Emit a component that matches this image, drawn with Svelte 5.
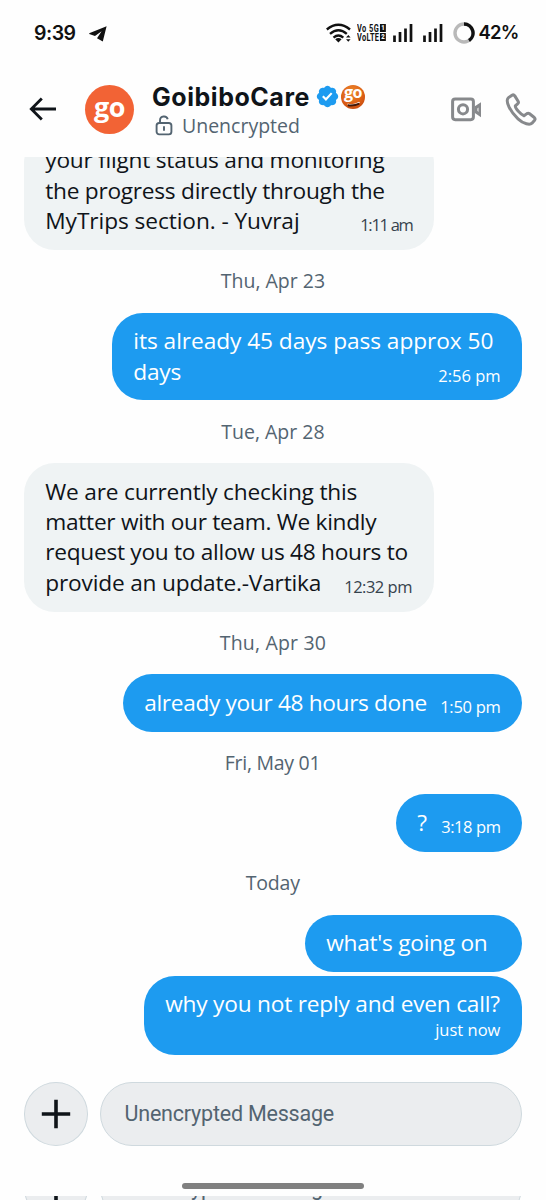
<script>
  const thread = [
    {
      side: 'in', wide: true, time: '1:11 am', timeW: 52,
      lines: [['your flight status and monitoring', 339], ['the progress directly through the', 340], ['MyTrips section. - Yuvraj', 254]]
    },
    { date: 'Thu, Apr 23', w: 104 },
    {
      side: 'out', wide: true, time: '2:56 pm', timeW: 62,
      lines: [['its already 45 days pass approx 50', 360], ['days', 48]]
    },
    { date: 'Tue, Apr 28', w: 103 },
    {
      side: 'in', wide: true, time: '12:32 pm', timeW: 68,
      lines: [['We are currently checking this', 312], ['matter with our team. We kindly', 331], ['request you to allow us 48 hours to', 363], ['provide an update.-Vartika', 276]]
    },
    { date: 'Thu, Apr 30', w: 106 },
    { side: 'out', time: '1:50 pm', timeW: 60, lines: [['already your 48 hours done', 283]] },
    { date: 'Fri, May 01', w: 96 },
    { side: 'out', time: '3:18 pm', timeW: 59, lines: [['?', 11]] },
    { date: 'Today', w: 54 },
    { side: 'out', time: '', timeW: 0, lines: [["what's going on", 161]] },
    { side: 'out', below: true, time: 'just now', timeW: 65, lines: [['why you not reply and even call?', 335]] }
  ];

  // Spreads the letters of a single line so that it fills the given width.
  function fit(node, width) {
    const apply = () => {
      node.style.letterSpacing = '0';
      node.style.width = 'auto';
      const natural = node.offsetWidth;
      const n = node.textContent.length;
      if (n > 1) node.style.letterSpacing = `${(width - natural) / n}px`;
      node.style.width = `${width}px`;
    };
    apply();
    document.fonts?.ready.then(apply);
  }
</script>

{#snippet signal()}
  <svg class="signal" width="20" height="18" viewBox="0 0 20 18">
    <path d="M1.5 11.5V18M7 8V18M12.5 4.5V18M18 0V18" stroke="#111" stroke-width="2.7" />
  </svg>
{/snippet}

{#snippet composer()}
  <div class="composer">
    <button class="plus" aria-label="Add">
      <svg width="30" height="30" viewBox="0 0 30 30"><path d="M15 .7v28.6M.8 15h28.4" stroke="#0f1419" stroke-width="3.6" /></svg>
    </button>
    <div class="field"><span use:fit={210}>Unencrypted Message</span></div>
  </div>
{/snippet}

<div class="screen">
  <div class="status">
    <span class="clock" use:fit={42}>9:39</span>
    <svg class="plane" width="18" height="16" viewBox="0 0 18 16"><path d="M17.6.2 13.8 15.4 8 12.3 12.6 5.2 6 10 .2 8.1Q-.2 7.4.8 6.9Z" fill="#111" /></svg>
    <svg class="wifi" width="26" height="20" viewBox="0 0 26 20">
      <g fill="none" stroke="#111" stroke-width="2.4">
        <path d="M.8 6.5Q12.4-3 24 6.5" /><path d="M4 10.8Q12.4 3.8 20.8 10.8" /><path d="M7.5 14.6Q12.4 10.4 17.3 14.6" />
      </g>
      <path d="M9.2 16.2Q12.4 13.8 15.6 16.2L12.4 19.5ZM20 14.4 22.3 12 24.6 14.4ZM20 16.3H24.6L22.3 18.8Z" fill="#111" />
    </svg>
    <div class="volte">
      <div><span use:fit={30}>Vo 5G</span><b>1</b></div>
      <div><span use:fit={30}>VoLTE</span><b>2</b></div>
    </div>
    {@render signal()}
    {@render signal()}
    <svg class="battery" width="22" height="22" viewBox="0 0 22 22">
      <circle cx="11" cy="11" r="9" fill="none" stroke="#b9b9b9" stroke-width="3.4" />
      <path d="M11 2a9 9 0 0 1 5 16.5" fill="none" stroke="#111" stroke-width="3.4" />
    </svg>
    <span class="pct" use:fit={39.5}>42%</span>
  </div>

  <header>
    <svg class="back" width="28" height="24" viewBox="0 0 28 24"><path d="M12.8 1.4 2.3 12 12.8 22.6M2.3 12H27" fill="none" stroke="#0f1419" stroke-width="2.8" /></svg>
    <div class="avatar"><span>go</span></div>
    <div class="who">
      <div class="name">
        <span use:fit={158}>GoibiboCare</span>
        <svg class="verified" width="23" height="23" viewBox="0.9 0.9 20.2 20.2"><path fill="#1d9bf0" d="M20.396 11c-.018-.646-.215-1.275-.57-1.816-.354-.54-.852-.972-1.438-1.246.223-.607.27-1.264.14-1.897-.131-.634-.437-1.218-.882-1.687-.47-.445-1.053-.75-1.687-.882-.633-.13-1.29-.083-1.897.14-.273-.587-.704-1.086-1.245-1.44S11.647 1.62 11 1.604c-.646.017-1.273.213-1.813.568s-.969.854-1.24 1.44c-.608-.223-1.267-.272-1.902-.14-.635.13-1.22.436-1.69.882-.445.47-.749 1.055-.878 1.688-.13.633-.08 1.29.144 1.896-.587.274-1.087.705-1.443 1.245-.356.54-.555 1.17-.574 1.817.02.647.218 1.276.574 1.817.356.54.856.972 1.443 1.245-.224.606-.274 1.263-.144 1.896.13.634.433 1.218.877 1.688.47.443 1.054.747 1.687.878.633.132 1.29.084 1.897-.136.274.586.705 1.084 1.246 1.439.54.354 1.17.551 1.816.569.647-.016 1.276-.213 1.817-.567s.972-.854 1.245-1.44c.604.239 1.266.296 1.903.164.636-.132 1.22-.447 1.68-.907.46-.46.776-1.044.908-1.681s.075-1.299-.165-1.903c.586-.274 1.084-.705 1.439-1.246.354-.54.551-1.17.569-1.816z" /><path fill="#fff" d="M9.662 14.85l-3.429-3.428 1.293-1.302 2.072 2.072 4.4-4.794 1.347 1.246z" /></svg>
        <div class="affiliate">
          <span>go</span>
          <svg width="16" height="6" viewBox="0 0 16 6"><path d="M1.5 3Q7 5.2 13.5 1.2" fill="none" stroke="#fff" stroke-width="1.3" /><path d="M1.8 4.2Q8 5.2 13.3 2.6" fill="none" stroke="#40180a" stroke-width="1.9" /></svg>
        </div>
      </div>
      <div class="sub">
        <svg width="18" height="21" viewBox="0 0 18 21"><g fill="none" stroke="#536471" stroke-width="1.9"><rect x="1.6" y="8" width="14.8" height="11.4" rx="2.6" /><path d="M5 8V5.4C5 .6 11.7.2 12.7 4.3M9 11.3v4.5" /></g></svg>
        <span use:fit={118}>Unencrypted</span>
      </div>
    </div>
    <svg class="video" width="31" height="25" viewBox="0 0 31 25">
      <rect x="1.6" y="1.9" width="20.8" height="20.8" rx="2.6" fill="none" stroke="#87898c" stroke-width="3" />
      <circle cx="12" cy="12.3" r="4.6" fill="none" stroke="#87898c" stroke-width="3" />
      <path d="M23.5 9.5 30 5.2V20.2L23.5 15.8Z" fill="#87898c" /><path d="M26 11.6 27.8 10.6V14.9L26 13.8Z" fill="#ccc" />
    </svg>
    <svg class="phone" width="32" height="33" viewBox="0 0 32 33"><path d="M3.2 4.9 7 2.2Q8.6 1.2 9.8 2.9L13.1 8.2Q14 9.7 12.6 10.8L10.3 12.9C10 15.3 15.8 21.7 19 22.7L21.9 20.6Q23.3 19.8 24.6 20.8L29.3 24.5Q30.6 25.7 29.6 27.2L27 30.2C24.9 32.2 18.8 31.2 13 25.8 5.5 18.8 0 8.6 3.2 4.9Z" fill="none" stroke="#87898c" stroke-width="3" stroke-linejoin="round" /></svg>
  </header>

  <main>
    {#each thread as item}
      {#if item.date}
        <div class="date"><span use:fit={item.w}>{item.date}</span></div>
      {:else}
        <div class="bubble {item.side}" class:wide={item.wide} class:below={item.below}>
          <div class="text">
            {#each item.lines as [line, w]}
              <div class="line"><span use:fit={w}>{line}</span></div>
            {/each}
          </div>
          <time><span use:fit={item.timeW}>{item.time}</span></time>
        </div>
      {/if}
    {/each}
  </main>

  <footer>
    {@render composer()}
    <div class="handle"></div>
    <div class="peek">{@render composer()}</div>
  </footer>
</div>

<style>
  :global(body) { margin: 0; background: #fefefe; }
  .screen {
    width: 546px; height: 1200px; overflow: hidden; display: flex; flex-direction: column;
    background: #fefefe; color: #0f1419; font-family: "Open Sans", sans-serif;
  }
  svg { display: block; flex: none; }
  span { display: inline-block; white-space: nowrap; }

  .status { height: 65px; flex: none; display: flex; align-items: center; padding: 0 28px 0 34px; box-sizing: border-box; color: #111; }
  .clock { font: 600 19.5px/24px Inter, sans-serif; }
  .plane { margin: 2px 0 0 13px; }
  .wifi { margin-left: 219px; }
  .volte { margin: 0 -4px 0 5px; width: 40px; flex: none; font: 700 10px/9px Roboto, sans-serif; transform: scaleX(0.74); transform-origin: 0 50%; }
  .volte div { display: flex; align-items: center; height: 9px; }
  .volte b { background: #111; color: #fff; width: 8px; height: 8px; line-height: 8px; font-size: 8px; text-align: center; margin-left: 1px; }
  .signal + .signal { margin-left: 10px; }
  .battery { margin: 0 4px 0 10px; }
  .pct { font: 600 18.5px/24px Inter, sans-serif; margin-top: -1px; }

  header { height: 92px; flex: none; display: flex; align-items: center; padding: 0 9px 4px 29px; box-sizing: border-box; }
  .avatar { width: 49px; height: 49px; margin: 0 18px 0 28px; flex: none; border-radius: 50%; background: #f26335; display: flex; justify-content: center; }
  .avatar span { color: #fff; font: 700 27px/43px "Open Sans", sans-serif; letter-spacing: -0.6px; }
  .who { flex: 1; padding-top: 3px; }
  .name { display: flex; align-items: center; height: 30px; font: 700 25px/30px Inter, sans-serif; }
  .verified { margin-left: 6px; }
  .affiliate { position: relative; margin-left: 2px; width: 24px; height: 24px; border-radius: 50%; background: radial-gradient(circle at 45% 30%, #ef8a2c, #d95b14 60%, #b63f0c); text-align: center; }
  .affiliate span { color: #fff; font: 700 16px/15px "Open Sans", sans-serif; letter-spacing: -0.5px; display: block; }
  .affiliate svg { position: absolute; left: 5px; top: 16px; }
  .sub { display: flex; align-items: center; height: 28px; gap: 9px; padding-left: 3px; color: #536471; font-size: 19.5px; }
  .sub span { line-height: 25px; margin-top: -1px; }
  .video { margin-right: 23px; }

  main { height: 898px; flex: none; overflow: hidden; padding: 0 24.5px 0 24px; display: flex; flex-direction: column; justify-content: flex-end; box-sizing: border-box; }
  .date { height: 62.7px; flex: none; display: flex; align-items: center; justify-content: center; color: #536471; font-size: 19.5px; line-height: 26px; }
  .bubble { display: flex; flex: none; align-items: flex-end; justify-content: space-between; padding: 13.6px 21.3px; border-radius: 31px; box-sizing: border-box; gap: 13px; }
  .bubble.wide { width: 409.5px; gap: 0; }
  .in { align-self: flex-start; background: #eff3f4; }
  .out { align-self: flex-end; background: #1d9bf0; color: #fff; }
  .line { height: 30.3px; font-size: 22.7px; line-height: 30.3px; }
  .wide .line { margin-right: -80px; }
  time { height: 22px; font-size: 16.5px; line-height: 21.5px; color: #36424c; }
  .out time { color: #fff; }
  .below { flex-direction: column; gap: 0; align-items: flex-end; margin-top: 3.5px; }

  footer { display: flex; flex-direction: column; flex: none; height: 145px; padding-top: 27px; box-sizing: border-box; }
  .composer { display: flex; gap: 12px; padding: 0 24.5px 0 24px; height: 63.5px; flex: none; }
  .plus { width: 64px; height: 63.5px; border-radius: 50%; border: 1.3px solid #cfd9de; background: #ebedef; padding: 0; display: flex; align-items: center; justify-content: center; box-sizing: border-box; }
  .field { flex: 1; border: 1.3px solid #cfd9de; border-radius: 32px; background: #ebedef; display: flex; align-items: center; padding-left: 23.5px; box-sizing: border-box; color: #536471; font-family: Roboto, sans-serif; font-size: 21.5px; }
  .handle { width: 182px; height: 6px; flex: none; border-radius: 3px; background: #808080; margin: 37.5px auto 7px; }
  .peek { height: 4px; flex: none; overflow: hidden; }
  .peek .composer { margin-top: -40px; }
</style>
